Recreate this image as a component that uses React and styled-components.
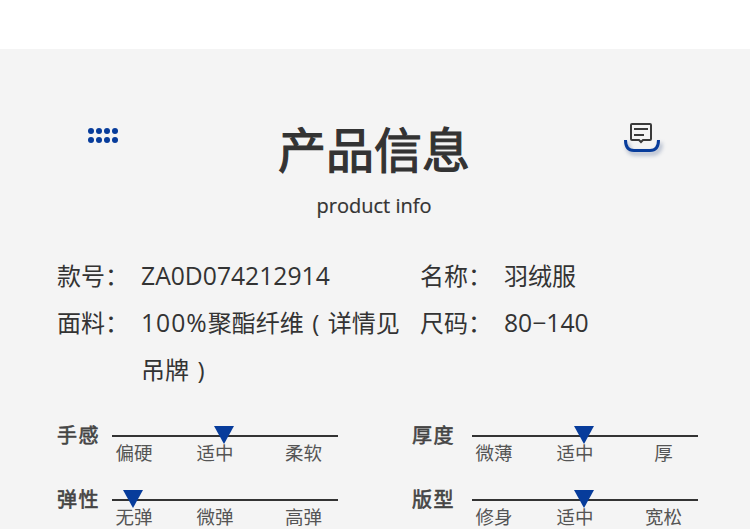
import styled, { createGlobalStyle } from 'styled-components';

const GlobalStyle = createGlobalStyle`
  html, body {
    margin: 0;
    background: #fff;
  }
  body {
    font-family: "Open Sans", "Noto Sans CJK SC", sans-serif;
    color: #333;
  }
`;

const Page = styled.div`
  width: 750px;
  height: 529px;
  overflow: hidden;
  padding-top: 49px;
  box-sizing: border-box;
`;

const Panel = styled.section`
  height: 480px;
  background: #f4f4f4;
  padding: 68px 57px 0;
  box-sizing: border-box;
`;

const Header = styled.header`
  display: grid;
  grid-template-columns: 89px 1fr 91px;
  height: 135px;
`;

const Heading = styled.div`
  text-align: center;
`;

const Title = styled.h1`
  margin: -3px 0 3px;
  font-size: 48px;
  line-height: 66px;
  font-weight: 400;
  -webkit-text-stroke: 1.2px #333;
  color: #333;
  font-family: "Noto Sans CJK SC", sans-serif;
`;

const Subtitle = styled.p`
  margin: 12px 0 0;
  font-size: 20px;
  line-height: 28px;
  -webkit-text-stroke: 0.2px #333;
`;

const Dots = styled.svg`
  width: 32px;
  height: 18px;
  margin: 10px 0 0 31px;
`;

const NoteIcon = styled.svg`
  width: 50px;
  height: 44px;
  margin: 3px 0 0 17px;
  overflow: visible;
`;

const Tray = styled.path`
  filter: drop-shadow(2px 3px 2px rgba(20, 50, 110, 0.4));
`;

const InfoGrid = styled.dl`
  display: grid;
  grid-template-columns: 84px 279px 84px 1fr;
  margin: 0;
  font-size: 24px;
  line-height: 47px;
`;

const InfoLabel = styled.dt`
  font-weight: 400;
`;

const InfoValue = styled.dd`
  margin: 0;
  width: 265px;
`;

const Latin = styled.span`
  font-size: 24.7px;
  letter-spacing: ${(p) => p.$track || 0}px;
`;

const Paren = styled.span`
  display: inline-block;
  width: 24px;
  text-align: center;
`;

const Sliders = styled.div`
  display: grid;
  grid-template-columns: 281px 286px;
  column-gap: 74px;
  row-gap: 22px;
  margin-top: 30px;
`;

const Slider = styled.div`
  display: grid;
  grid-template-columns: ${(p) => (p.$wide ? '60px' : '55px')} 226px;
`;

const SliderName = styled.div`
  margin-top: -2px;
  font-size: 20px;
  line-height: 28px;
  font-weight: 400;
  -webkit-text-stroke: 0.6px #444;
  letter-spacing: 1.5px;
  color: #444;
  font-family: "Noto Sans CJK SC", sans-serif;
`;

const Track = styled.div`
  position: relative;
  padding-top: 12px;
`;

const Line = styled.div`
  height: 2px;
  background: #333;
`;

const Marker = styled.div`
  position: absolute;
  top: 3px;
  left: ${(p) => p.$at}px;
  width: 0;
  height: 0;
  border-left: 10.5px solid transparent;
  border-right: 10.5px solid transparent;
  border-top: 18px solid #073c9b;
`;

const Scale = styled.div`
  display: grid;
  grid-template-columns: 81px 77px 60px;
  padding-left: 3.5px;
  font-size: 18.5px;
  line-height: 24px;
  margin-top: 4px;
  color: #555;
`;

const ScaleEnd = styled.span`
  text-align: center;
`;

const sliders = [
  { name: '手感', at: 102, stops: ['偏硬', '适中', '柔软'] },
  { name: '厚度', at: 102, stops: ['微薄', '适中', '厚'], wide: true },
  { name: '弹性', at: 11, stops: ['无弹', '微弹', '高弹'] },
  { name: '版型', at: 102, stops: ['修身', '适中', '宽松'], wide: true },
];

const App = () => (
  <Page>
    <GlobalStyle />
    <Panel>
      <Header>
        <Dots viewBox="0 0 32 18" fill="#073c9b">
          {[3, 11, 19, 27].map((x) =>
            [4, 13].map((y) => <circle key={`${x}-${y}`} cx={x} cy={y} r="3" />)
          )}
        </Dots>
        <Heading>
          <Title>产品信息</Title>
          <Subtitle>product info</Subtitle>
        </Heading>
        <NoteIcon viewBox="0 0 50 44" fill="none">
          <Tray d="M6.5 20 C6.5 27.5 9.5 30.5 15 30.5 H31 C36.5 30.5 39.5 27.5 39.5 20" stroke="#073c9b" strokeWidth="3" />
          <path d="M12 5 C12 4.4 12.4 4 13 4 H31 C31.6 4 32 4.4 32 5 V19 C32 19.6 31.6 20 31 20 H24 L22 22 L20 20 H13 C12.4 20 12 19.6 12 19 Z" stroke="#3a3a3a" strokeWidth="2" />
          <path d="M15 9 H29 M15 15 H25" stroke="#3a3a3a" strokeWidth="2" />
        </NoteIcon>
      </Header>
      <InfoGrid>
        <InfoLabel>款号：</InfoLabel>
        <InfoValue><Latin>ZA0D074212914</Latin></InfoValue>
        <InfoLabel>名称：</InfoLabel>
        <InfoValue>羽绒服</InfoValue>
        <InfoLabel>面料：</InfoLabel>
        <InfoValue>
          <Latin $track={1}>100%</Latin>聚酯纤维<Paren>(</Paren>详情见吊牌<Paren>)</Paren>
        </InfoValue>
        <InfoLabel>尺码：</InfoLabel>
        <InfoValue><Latin>80−140</Latin></InfoValue>
      </InfoGrid>
      <Sliders>
        {sliders.map((s) => (
          <Slider key={s.name} $wide={s.wide}>
            <SliderName>{s.name}</SliderName>
            <Track>
              <Line />
              <Marker $at={s.at} />
              <Scale>
                <span>{s.stops[0]}</span>
                <span>{s.stops[1]}</span>
                <ScaleEnd>{s.stops[2]}</ScaleEnd>
              </Scale>
            </Track>
          </Slider>
        ))}
      </Sliders>
    </Panel>
  </Page>
);

export default App;
